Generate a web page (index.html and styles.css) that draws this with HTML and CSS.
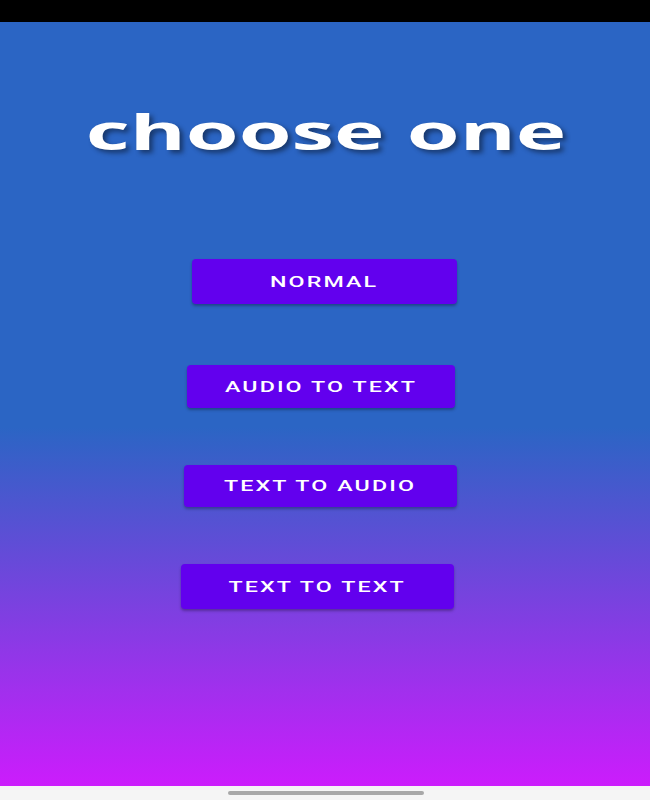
FILE: index.html
```html
<!DOCTYPE html>
<html>
<head>
<meta charset="utf-8">
<link rel="stylesheet" href="styles.css">
</head>
<body>
<div class="status-bar"></div>
<main class="screen">
  <h1 class="title"><span>choose one</span></h1>
  <div class="buttons">
    <button class="btn btn-normal"><span>NORMAL</span></button>
    <button class="btn btn-a2t"><span>AUDIO TO TEXT</span></button>
    <button class="btn btn-t2a"><span>TEXT TO AUDIO</span></button>
    <button class="btn btn-t2t"><span>TEXT TO TEXT</span></button>
  </div>
</main>
<div class="nav-bar"><div class="nav-pill"></div></div>
</body>
</html>
```
FILE: styles.css
```css
html, body {
  margin: 0;
  padding: 0;
  width: 650px;
  height: 800px;
  overflow: hidden;
  font-family: Roboto, "Liberation Sans", sans-serif;
}
.status-bar {
  height: 22px;
  background: #000;
}
.screen {
  height: 764px;
  box-sizing: border-box;
  padding-top: 80px;
  background: linear-gradient(to bottom, #2b65c4 0%, #2b65c4 53%, #cc1cfc 100%);
  display: flex;
  flex-direction: column;
}
.title {
  margin: 0;
  height: 60px;
  line-height: 60px;
  text-align: center;
  font-family: "Open Sans", sans-serif;
  font-weight: 700;
  font-size: 48px;
  color: #fff;
  text-shadow: 2px 3px 4px rgba(0, 0, 0, 0.45);
}
.title span {
  display: inline-block;
  transform: scaleX(1.78);
  margin-left: 2px;
}
.buttons {
  display: flex;
  flex-direction: column;
  align-items: flex-start;
  margin-top: 97px;
}
.btn {
  border: none;
  border-radius: 4px;
  background: #6200ee;
  color: #fff;
  font-family: Roboto, sans-serif;
  font-weight: 500;
  font-size: 15.5px;
  letter-spacing: 1.4px;
  box-shadow: 0 2px 3px rgba(0, 0, 0, 0.3);
  display: flex;
  align-items: center;
  justify-content: center;
  padding: 0;
}
.btn span {
  display: inline-block;
  transform: scaleX(1.5);
}
.btn-normal { margin-left: 192px; width: 265px; height: 45px; }
.btn-a2t { margin-left: 187px; width: 268px; height: 43px; margin-top: 61px; }
.btn-t2a { margin-left: 184px; width: 273px; height: 42px; margin-top: 57px; }
.btn-t2t { margin-left: 181px; width: 273px; height: 45px; margin-top: 57px; }
.nav-bar {
  height: 14px;
  background: #f5f5f5;
  display: flex;
  justify-content: center;
  padding-top: 5px;
  box-sizing: border-box;
}
.nav-pill {
  width: 196px;
  height: 4px;
  border-radius: 2px;
  background: #a8a8a8;
  margin-left: 2px;
}
```
